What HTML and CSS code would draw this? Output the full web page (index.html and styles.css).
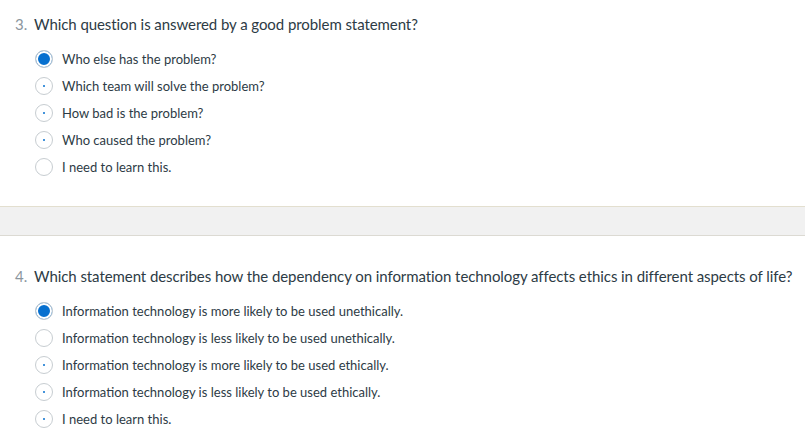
FILE: index.html
```html
<!DOCTYPE html>
<html>
<head>
<meta charset="utf-8">
<link rel="stylesheet" href="styles.css">
</head>
<body>
<div class="question q3">
  <div class="title"><span class="num">3.</span><span class="text">Which question is answered by a good problem statement?</span></div>
  <ul class="options">
    <li class="opt"><span class="radio checked"></span><span class="label">Who else has the problem?</span></li>
    <li class="opt"><span class="radio dot"></span><span class="label">Which team will solve the problem?</span></li>
    <li class="opt"><span class="radio dot"></span><span class="label">How bad is the problem?</span></li>
    <li class="opt"><span class="radio dot"></span><span class="label">Who caused the problem?</span></li>
    <li class="opt"><span class="radio"></span><span class="label">I need to learn this.</span></li>
  </ul>
</div>
<div class="band"></div>
<div class="question q4">
  <div class="title"><span class="num">4.</span><span class="text">Which statement describes how the dependency on information technology affects ethics in different aspects of life?</span></div>
  <ul class="options">
    <li class="opt"><span class="radio checked"></span><span class="label">Information technology is more likely to be used unethically.</span></li>
    <li class="opt"><span class="radio"></span><span class="label">Information technology is less likely to be used unethically.</span></li>
    <li class="opt"><span class="radio dot"></span><span class="label">Information technology is more likely to be used ethically.</span></li>
    <li class="opt"><span class="radio dot"></span><span class="label">Information technology is less likely to be used ethically.</span></li>
    <li class="opt"><span class="radio dot"></span><span class="label">I need to learn this.</span></li>
  </ul>
</div>
</body>
</html>
```

FILE: styles.css
```css
html, body {
  margin: 0;
  padding: 0;
  background: #ffffff;
  font-family: Lato, "Open Sans", sans-serif;
  color: #2d3b45;
  overflow: hidden;
}
.question {
  padding-left: 15px;
}
.q3 {
  padding-top: 14px;
  padding-bottom: 26px;
}
.q4 {
  padding-top: 30px;
}
.title {
  display: flex;
  align-items: center;
  height: 20px;
  font-size: 15px;
  line-height: 20px;
}
.num {
  color: #8b969e;
  width: 19px;
}
.text {
  letter-spacing: -0.07px;
}
.options {
  list-style: none;
  margin: 11px 0 0 0;
  padding: 0 0 0 20px;
}
.opt {
  display: flex;
  align-items: center;
  height: 27px;
}
.radio {
  position: relative;
  box-sizing: border-box;
  width: 18px;
  height: 18px;
  border-radius: 50%;
  border: 1px solid #c7cdd1;
  background: #fff;
  margin-right: 9px;
  flex: none;
}
.radio.checked {
  background: #0770cf;
  box-shadow: inset 0 0 0 2px #fff;
}
.radio.dot::after {
  content: "";
  position: absolute;
  left: 7px;
  top: 7px;
  width: 2px;
  height: 2px;
  border-radius: 50%;
  background: #0770cf;
}
.label {
  font-size: 13px;
  line-height: 18px;
}
.band {
  height: 28px;
  background: #f1f1f1;
  border-top: 1px solid #e3dfcf;
  border-bottom: 1px solid #dcdad3;
}
```
